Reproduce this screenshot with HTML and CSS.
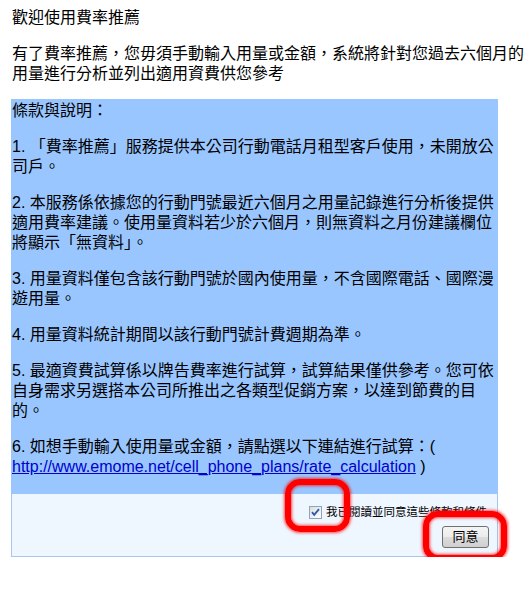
FILE: index.html
```html
<!DOCTYPE html>
<html lang="zh-Hant">
<head>
<meta charset="utf-8">
<title>歡迎使用費率推薦</title>
<link rel="stylesheet" href="styles.css">
</head>
<body>
<div class="page">
  <p class="title">歡迎使用費率推薦</p>
  <p class="intro">有了費率推薦，您毋須手動輸入用量或金額，系統將針對您過去六個月的用量進行分析並列出適用資費供您參考</p>
  <div class="terms">
    <div class="terms-body">
      <p>條款與說明：</p>
      <p>1. 「費率推薦」服務提供本公司行動電話月租型客戶使用，未開放公司戶。</p>
      <p>2. 本服務係依據您的行動門號最近六個月之用量記錄進行分析後提供適用費率建議。使用量資料若少於六個月，則無資料之月份建議欄位將顯示「無資料」。</p>
      <p>3. 用量資料僅包含該行動門號於國內使用量，不含國際電話、國際漫遊用量。</p>
      <p>4. 用量資料統計期間以該行動門號計費週期為準。</p>
      <p>5. 最適資費試算係以牌告費率進行試算，試算結果僅供參考。您可依自身需求另選搭本公司所推出之各類型促銷方案，以達到節費的目的。</p>
      <p>6. 如想手動輸入使用量或金額，請點選以下連結進行試算：( <a class="link" href="#">http://www.emome.net/cell_phone_plans/rate_calculation</a> )</p>
    </div>
    <div class="terms-foot">
      <label class="agree">
        <svg class="check" width="13" height="13" viewBox="0 0 13 13" aria-hidden="true">
          <defs>
            <linearGradient id="cbg" x1="0" y1="0" x2="1" y2="1">
              <stop offset="0" stop-color="#dcdcd6"/>
              <stop offset="1" stop-color="#ffffff"/>
            </linearGradient>
          </defs>
          <rect x="0.5" y="0.5" width="12" height="12" fill="url(#cbg)" stroke="#8ea3bd"/>
          <path d="M3 6.2 L5.2 8.8 L10 3.2" fill="none" stroke="#2b56b8" stroke-width="1.8"/>
        </svg>
        <span>我已閱讀並同意這些條款和條件</span>
      </label>
      <div class="actions">
        <button class="btn" type="button">同意</button>
      </div>
    </div>
  </div>
  <div class="mark mark-check"></div>
  <div class="mark mark-btn"></div>
</div>
</body>
</html>
```
FILE: styles.css
```css
html, body {
  margin: 0;
  padding: 0;
  background: #ffffff;
}

body {
  font-family: "Liberation Sans", Arial, "Noto Sans CJK TC", sans-serif;
  font-size: 16px;
  line-height: 20px;
  color: #000000;
}

.page {
  position: relative;
  padding: 8px 0 0 11px;
  width: 518px;
}

.title {
  margin: 0 0 16px;
  padding-left: 1px;
}

.intro {
  margin: 0 0 15px;
  padding-left: 1px;
}

.terms {
  width: 487px;
}

.terms-body {
  background: #99c6ff;
  padding: 2px 0 1px 1px;
}

.terms-body p {
  margin: 0 0 16px;
}

.link {
  color: #0000cc;
  text-decoration: underline;
}

.terms-foot {
  background: #eef6ff;
  border: 1px solid #a6c6ee;
  border-top: none;
  padding: 10px 8px 8px;
}

.agree {
  display: flex;
  justify-content: flex-end;
  align-items: center;
  height: 16px;
  padding-right: 2px;
  font-size: 11.5px;
  line-height: 16px;
}

.check {
  display: block;
  margin-right: 4px;
  flex: none;
}

.actions {
  display: flex;
  justify-content: flex-end;
  margin-top: 6px;
}

.btn {
  width: 47px;
  height: 22px;
  padding: 0;
  border: 1px solid #707070;
  border-radius: 3px;
  background: linear-gradient(#f4f4f4 0%, #ececec 50%, #dcdcdc 51%, #cfcfcf 100%);
  font-family: "Liberation Sans", Arial, "Noto Sans CJK TC", sans-serif;
  font-size: 13px;
  line-height: 20px;
  color: #000000;
}

.mark {
  position: absolute;
  box-sizing: border-box;
  border: 6px solid #ff0000;
  border-radius: 15px;
  box-shadow: 0 0 3px 1px rgba(255, 0, 0, 0.7), inset 0 0 3px 1px rgba(255, 0, 0, 0.7);
  pointer-events: none;
}

.mark-check {
  left: 285px;
  top: 479px;
  width: 65px;
  height: 53px;
}

.mark-btn {
  left: 423px;
  top: 511px;
  width: 84px;
  height: 50px;
}
```
